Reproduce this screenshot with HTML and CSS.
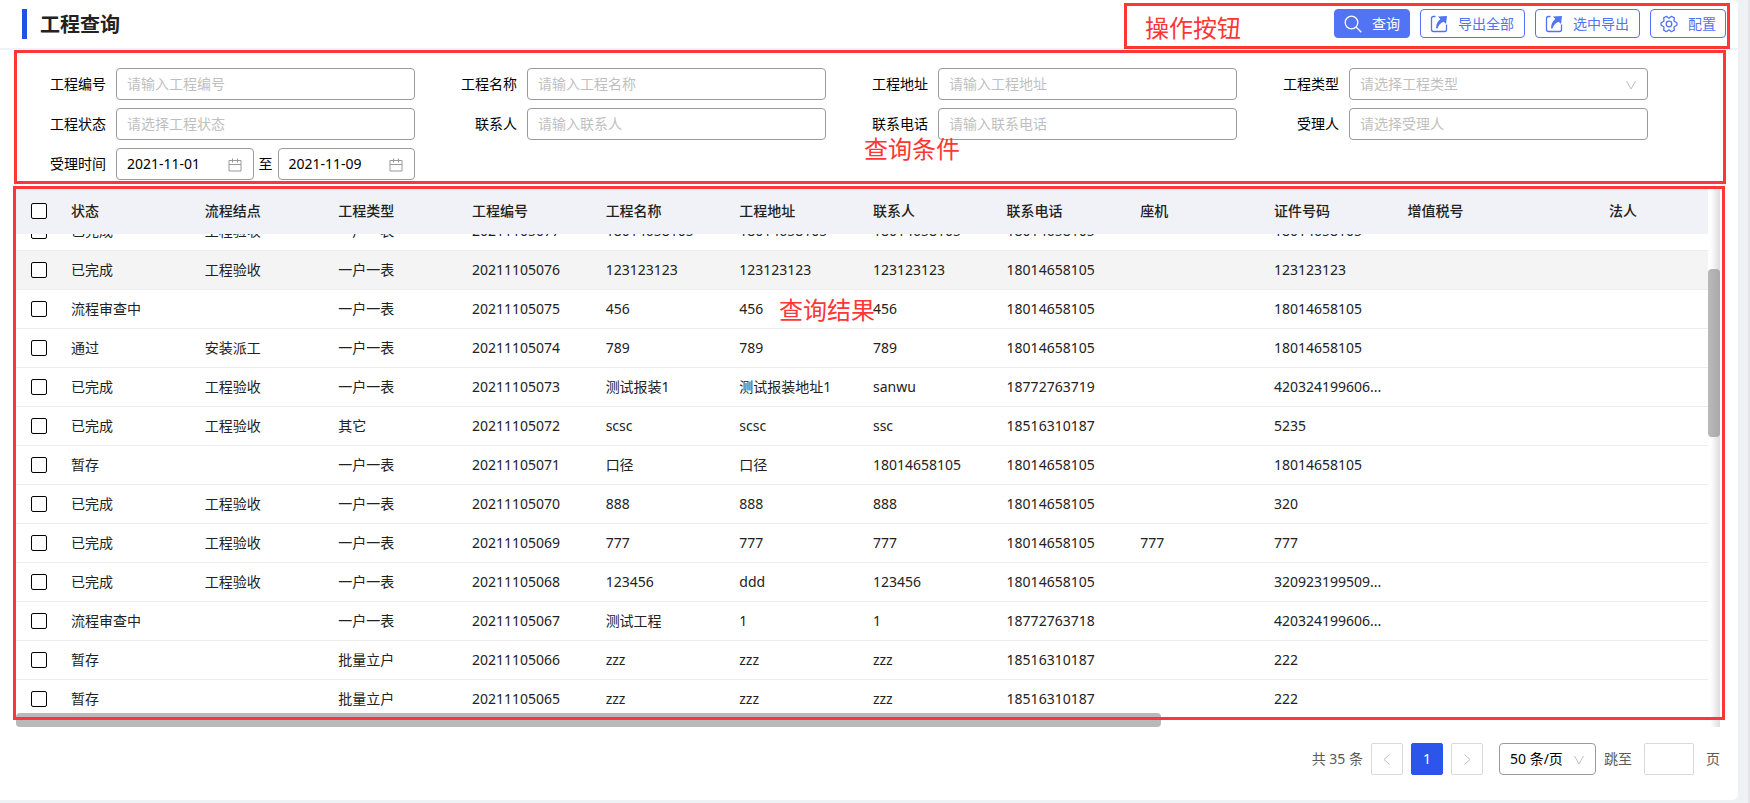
FILE: index.html
```html
<!DOCTYPE html>
<html lang="zh-CN">
<head>
<meta charset="utf-8">
<title>工程查询</title>
<link rel="stylesheet" href="styles.css">
</head>
<body>
<main class="panel">
  <header class="topbar">
    <h1 class="title">工程查询</h1>
    <div class="actions">
      <button type="button" class="btn btn-primary"><svg class="icon" viewBox="0 0 18 18"><circle cx="7.500" cy="7.500" r="6.300"/><path d="M12 12l5.300 5.300"/></svg>查询</button>
      <button type="button" class="btn btn-export"><svg class="icon" viewBox="0 0 18 18"><path d="M5.500 1.500H3.500Q1.500 1.500 1.500 3.500v11q0 2 2 2h11q2 0 2-2V9.500"/><path class="solid" d="M8 1.500L17 1l-1 8-2.300-2.300Q9 8.500 7.500 13.500L6 13.200Q6 7.500 10.300 4z"/></svg>导出全部</button>
      <button type="button" class="btn btn-export"><svg class="icon" viewBox="0 0 18 18"><path d="M5.500 1.500H3.500Q1.500 1.500 1.500 3.500v11q0 2 2 2h11q2 0 2-2V9.500"/><path class="solid" d="M8 1.500L17 1l-1 8-2.300-2.300Q9 8.500 7.500 13.500L6 13.200Q6 7.500 10.300 4z"/></svg>选中导出</button>
      <button type="button" class="btn"><svg class="icon" viewBox="0 0 18 18"><path d="M9 3.200L11.500 1.300 14.300 2.900 14 6 17 8v2l-3 2 .300 3.100-2.800 1.600L9 14.800l-2.500 1.900-2.800-1.600L4 12 1 10V8l3-2-.300-3.100L6.500 1.300z"/><circle cx="9" cy="9" r="2.800"/></svg>配置</button>
    </div>
    <div class="mark mark-actions"><span class="mark-text">操作按钮</span></div>
  </header>

  <form class="filters">
    <div class="field"><label for="f-no">工程编号</label><input id="f-no" class="control" type="text" placeholder="请输入工程编号"></div>
    <div class="field"><label for="f-name">工程名称</label><input id="f-name" class="control" type="text" placeholder="请输入工程名称"></div>
    <div class="field"><label for="f-addr">工程地址</label><input id="f-addr" class="control" type="text" placeholder="请输入工程地址"></div>
    <div class="field"><label for="f-type">工程类型</label><div class="select-wrap"><select id="f-type" class="control empty"><option>请选择工程类型</option></select><svg class="chevron" viewBox="0 0 12 12"><path d="M1.500 2l4.500 8 4.500-8"/></svg></div></div>
    <div class="field"><label for="f-state">工程状态</label><select id="f-state" class="control empty"><option>请选择工程状态</option></select></div>
    <div class="field"><label for="f-contact">联系人</label><input id="f-contact" class="control" type="text" placeholder="请输入联系人"></div>
    <div class="field"><label for="f-phone">联系电话</label><input id="f-phone" class="control" type="text" placeholder="请输入联系电话"></div>
    <div class="field"><label for="f-owner">受理人</label><select id="f-owner" class="control empty"><option>请选择受理人</option></select></div>
    <div class="field"><label for="f-from">受理时间</label>
      <div class="range">
        <div class="date"><input id="f-from" class="control" type="text" value="2021-11-01"><svg class="calendar" viewBox="0 0 14 14"><path d="M1 2.500h12v10.500H1zM1 6.500h12M4.500 0.500v4M9.500 0.500v4"/></svg></div>
        <label for="f-to">至</label>
        <div class="date"><input id="f-to" class="control" type="text" value="2021-11-09"><svg class="calendar" viewBox="0 0 14 14"><path d="M1 2.500h12v10.500H1zM1 6.500h12M4.500 0.500v4M9.500 0.500v4"/></svg></div>
      </div>
    </div>
    <div class="mark mark-filters"><span class="mark-text">查询条件</span></div>
  </form>

  <section class="results">
    <div class="grid">
      <table class="table table-head">
        <colgroup><col class="c-check"><col span="10" class="c-std"><col class="c-wide"><col></colgroup>
        <thead><tr><th><input type="checkbox" aria-label="全选"></th><th>状态</th><th>流程结点</th><th>工程类型</th><th>工程编号</th><th>工程名称</th><th>工程地址</th><th>联系人</th><th>联系电话</th><th>座机</th><th>证件号码</th><th>增值税号</th><th>法人</th></tr></thead>
      </table>
      <div class="viewport">
        <table class="table table-body">
          <colgroup><col class="c-check"><col span="10" class="c-std"><col class="c-wide"><col></colgroup>
          <tbody>
            <tr><td><input type="checkbox" aria-label="20211105077"></td><td>已完成</td><td>工程验收</td><td>一户一表</td><td>20211105077</td><td>18014658105</td><td>18014658105</td><td>18014658105</td><td>18014658105</td><td></td><td>18014658105</td><td></td><td></td></tr>
            <tr class="hovered"><td><input type="checkbox" aria-label="20211105076"></td><td>已完成</td><td>工程验收</td><td>一户一表</td><td>20211105076</td><td>123123123</td><td>123123123</td><td>123123123</td><td>18014658105</td><td></td><td>123123123</td><td></td><td></td></tr>
            <tr><td><input type="checkbox" aria-label="20211105075"></td><td>流程审查中</td><td></td><td>一户一表</td><td>20211105075</td><td>456</td><td>456</td><td>456</td><td>18014658105</td><td></td><td>18014658105</td><td></td><td></td></tr>
            <tr><td><input type="checkbox" aria-label="20211105074"></td><td>通过</td><td>安装派工</td><td>一户一表</td><td>20211105074</td><td>789</td><td>789</td><td>789</td><td>18014658105</td><td></td><td>18014658105</td><td></td><td></td></tr>
            <tr><td><input type="checkbox" aria-label="20211105073"></td><td>已完成</td><td>工程验收</td><td>一户一表</td><td>20211105073</td><td>测试报装1</td><td>测试报装地址1</td><td>sanwu</td><td>18772763719</td><td></td><td>420324199606...</td><td></td><td></td></tr>
            <tr><td><input type="checkbox" aria-label="20211105072"></td><td>已完成</td><td>工程验收</td><td>其它</td><td>20211105072</td><td>scsc</td><td>scsc</td><td>ssc</td><td>18516310187</td><td></td><td>5235</td><td></td><td></td></tr>
            <tr><td><input type="checkbox" aria-label="20211105071"></td><td>暂存</td><td></td><td>一户一表</td><td>20211105071</td><td>口径</td><td>口径</td><td>18014658105</td><td>18014658105</td><td></td><td>18014658105</td><td></td><td></td></tr>
            <tr><td><input type="checkbox" aria-label="20211105070"></td><td>已完成</td><td>工程验收</td><td>一户一表</td><td>20211105070</td><td>888</td><td>888</td><td>888</td><td>18014658105</td><td></td><td>320</td><td></td><td></td></tr>
            <tr><td><input type="checkbox" aria-label="20211105069"></td><td>已完成</td><td>工程验收</td><td>一户一表</td><td>20211105069</td><td>777</td><td>777</td><td>777</td><td>18014658105</td><td>777</td><td>777</td><td></td><td></td></tr>
            <tr><td><input type="checkbox" aria-label="20211105068"></td><td>已完成</td><td>工程验收</td><td>一户一表</td><td>20211105068</td><td>123456</td><td>ddd</td><td>123456</td><td>18014658105</td><td></td><td>320923199509...</td><td></td><td></td></tr>
            <tr><td><input type="checkbox" aria-label="20211105067"></td><td>流程审查中</td><td></td><td>一户一表</td><td>20211105067</td><td>测试工程</td><td>1</td><td>1</td><td>18772763718</td><td></td><td>420324199606...</td><td></td><td></td></tr>
            <tr><td><input type="checkbox" aria-label="20211105066"></td><td>暂存</td><td></td><td>批量立户</td><td>20211105066</td><td>zzz</td><td>zzz</td><td>zzz</td><td>18516310187</td><td></td><td>222</td><td></td><td></td></tr>
            <tr><td><input type="checkbox" aria-label="20211105065"></td><td>暂存</td><td></td><td>批量立户</td><td>20211105065</td><td>zzz</td><td>zzz</td><td>zzz</td><td>18516310187</td><td></td><td>222</td><td></td><td></td></tr>
          </tbody>
        </table>
      </div>
      <div class="hbar"><div class="hthumb"></div></div>
    </div>
    <div class="vbar"><div class="vthumb"></div></div>
    <div class="mark mark-results"><span class="mark-text">查询结果</span></div>
  </section>

  <nav class="pager" aria-label="分页">
    <span class="total">共 35 条</span>
    <button type="button" class="page" aria-label="上一页"><svg class="arrow" viewBox="0 0 12 12"><path d="M8.500 1.500L3 6.500l5.500 5"/></svg></button>
    <button type="button" class="page current">1</button>
    <button type="button" class="page" aria-label="下一页"><svg class="arrow" viewBox="0 0 12 12"><path d="M3.500 1.500L9 6.500l-5.500 5"/></svg></button>
    <div class="select-wrap page-size"><select class="control" aria-label="每页条数"><option>50 条/页</option></select><svg class="chevron" viewBox="0 0 12 12"><path d="M1.500 2l4.500 8 4.500-8"/></svg></div>
    <label for="jump">跳至</label>
    <input id="jump" class="jump" type="text">
    <span>页</span>
  </nav>
</main>
</body>
</html>
```
FILE: styles.css
```css
* { box-sizing: border-box; }

body {
  margin: 0;
  background: #eff2f4;
  border-right: 2px solid #e6e6e6;
  font: 14px/20px "Noto Sans", "Noto Sans CJK SC", sans-serif;
  color: #000;
}

input, select, button { font: inherit; color: inherit; }

.panel {
  display: flex;
  flex-direction: column;
  height: calc(100vh - 3px);
  margin: 0 10px 3px 0;
  background: #fff;
  border-radius: 0 6px 6px 0;
  overflow: hidden;
}

/* Title bar */
.topbar {
  position: relative;
  display: flex;
  justify-content: space-between;
  align-items: flex-start;
  height: 50px;
  padding: 9px 12px 0 22px;
  border-bottom: 2px solid #f0f4fa;
}

.title {
  margin: 0;
  padding: 2px 0 0 13px;
  border-left: 5px solid #2250e8;
  font-size: 20px;
  line-height: 28px;
  color: #222;
}

.actions { display: flex; gap: 10px; }

.btn {
  display: flex;
  align-items: center;
  gap: 10px;
  height: 29px;
  padding: 0 9px;
  border: 1px solid #5273f3;
  border-radius: 4px;
  background: #fff;
  color: #5273f3;
}

.btn-primary { background: #5273f3; color: #fff; }
.btn-export { padding-right: 10px; }

.icon { width: 18px; height: 18px; fill: none; stroke: currentColor; stroke-width: 1.3; stroke-linejoin: round; }
.icon .solid { fill: currentColor; stroke: none; }

/* Filters */
.filters {
  position: relative;
  display: grid;
  grid-template-columns: repeat(4, 1fr);
  gap: 8px 0;
  padding: 18px 78px 6px 16px;
}

.field { display: flex; align-items: center; gap: 10px; padding-right: 12px; }
.field > label { width: 90px; text-align: right; }
.field > .control, .select-wrap, .range { flex: 1; min-width: 0; }

.control {
  display: block;
  width: 100%;
  height: 32px;
  padding: 0 11px 1px 10px;
  border: 1px solid #9a9a9a;
  border-radius: 4px;
  background: #fff;
  appearance: none;
}

.control::placeholder { color: #bfbfbf; opacity: 1; }
.empty { color: #bfbfbf; }

.select-wrap, .date { position: relative; }
.chevron, .calendar { position: absolute; fill: none; stroke: #bfbfbf; pointer-events: none; }
.chevron { top: 11px; right: 11px; width: 12px; height: 12px; }
.calendar { top: 10px; right: 12px; width: 14px; height: 14px; stroke: #999; }

.range { display: flex; align-items: center; gap: 5px; }
.date { flex: 1; }

/* Results */
.results { position: relative; display: flex; flex: 1; min-height: 0; padding: 0 18px 0 16px; }
.grid { display: flex; flex: 1; flex-direction: column; min-width: 0; }

.table { width: 100%; table-layout: fixed; border-collapse: separate; border-spacing: 0; white-space: nowrap; }
.c-check { width: 40px; }
.c-std { width: 7.9%; }
.c-wide { width: 11.9%; }

.table th { height: 48px; padding: 2px 0 0 15px; background: #f0f2f7; text-align: left; font-weight: 500; color: #222; }
.table td { height: 39px; padding: 0 0 0 15px; border-bottom: 1px solid #ededed; color: #222; }
.hovered td { background: #f4f4f4; }

.table input {
  display: block;
  width: 16px;
  height: 16px;
  margin: 0;
  border: 1px solid #000;
  border-radius: 2px;
  background: #fff;
  appearance: none;
}

.viewport { flex: 1; min-height: 0; overflow: hidden; }
.table-body { margin-top: -22px; }

.hbar { height: 14px; }
.hthumb { width: 67.7%; height: 100%; border-radius: 4px; background: #b9b9b9; }

.vbar { width: 12px; padding-top: 83px; background: linear-gradient(to right, #fff 20%, #dcdcdc); }
.vthumb { height: 168px; border-radius: 4px; background: linear-gradient(to right, #bababa, #a8a8a8); }

/* Red call-outs laid over the page */
.mark { position: absolute; border: 3px solid #fe3636; color: #fe3636; font-size: 24px; line-height: 32px; pointer-events: none; }
.mark-text { position: absolute; white-space: nowrap; }
.mark-actions { top: 3px; right: 8px; width: 606px; height: 46px; }
.mark-actions .mark-text { top: 6px; left: 18px; }
.mark-filters { inset: 0 12px 2px 14px; }
.mark-filters .mark-text { top: 80px; left: calc(50% - 6px); }
.mark-results { inset: 0 13px 7px 13px; }
.mark-results .mark-text { top: 105px; left: calc(50% - 90px); }

/* Pagination */
.pager {
  display: flex;
  justify-content: flex-end;
  align-items: center;
  padding: 16px 18px 25px 0;
  color: #595959;
}

.page {
  display: grid;
  place-items: center;
  width: 32px;
  height: 32px;
  margin-left: 8px;
  padding: 0;
  border: 1px solid #d9d9d9;
  border-radius: 2px;
  background: #fff;
}

.current { border-color: #2b55eb; background: #2b55eb; color: #fff; }
.arrow { width: 12px; height: 12px; fill: none; stroke: #bfbfbf; }
.page-size { flex: none; width: 97px; margin: 0 8px 0 16px; color: #000; }
.jump { width: 50px; height: 32px; margin: 0 12px; border: 1px solid #d9d9d9; border-radius: 2px; }
```
